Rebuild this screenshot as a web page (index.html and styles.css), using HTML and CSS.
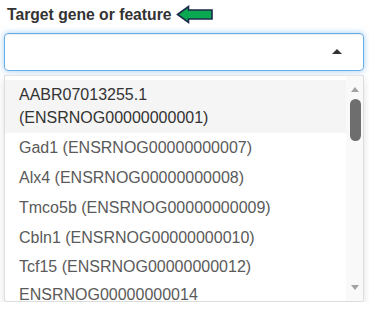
FILE: index.html
```html
<!DOCTYPE html>
<html lang="en">
<head>
    <meta charset="UTF-8">
    <meta name="viewport" content="width=device-width, initial-scale=1.0">
    <title>Target gene or feature</title>
    <link rel="stylesheet" href="styles.css">
</head>
<body>
    <div class="field">
        <div class="field-label">
            <label for="target">Target gene or feature</label>
            <svg class="pointer" width="38" height="20" viewBox="0 0 38 20">
                <polygon points="1.5,9.5 12.5,1.5 12.5,5 36,5 36,14 12.5,14 12.5,17.5" fill="#0aa850" stroke="#1b2a4a" stroke-width="1.6" stroke-linejoin="miter"/>
            </svg>
        </div>
        <div class="select-box" id="target">
            <span class="caret"></span>
        </div>
        <div class="dropdown">
            <ul class="options">
                <li class="active">AABR07013255.1 (ENSRNOG00000000001)</li>
                <li>Gad1 (ENSRNOG00000000007)</li>
                <li>Alx4 (ENSRNOG00000000008)</li>
                <li>Tmco5b (ENSRNOG00000000009)</li>
                <li>Cbln1 (ENSRNOG00000000010)</li>
                <li>Tcf15 (ENSRNOG00000000012)</li>
                <li>ENSRNOG00000000014</li>
            </ul>
            <div class="scrollbar">
                <span class="arrow up"></span>
                <span class="thumb"></span>
                <span class="arrow down"></span>
            </div>
        </div>
    </div>
</body>
</html>
```

FILE: styles.css
```css
body {
    font-family: 'Liberation Sans', Arial, sans-serif;
    background-color: #ffffff;
    color: #333333;
    margin: 0;
    padding: 5px 5px 0 4px;
}

.field {
    width: 360px;
}

.field-label {
    display: flex;
    align-items: center;
    height: 20px;
    margin-left: 3px;
    margin-bottom: 8px;
}

.field-label label {
    font-size: 15.7px;
    font-weight: bold;
    line-height: 20px;
    color: #333333;
}

.pointer {
    margin-left: 5px;
    margin-top: -1px;
}

.select-box {
    box-sizing: border-box;
    height: 38px;
    border: 1px solid #66afe9;
    border-radius: 4px;
    box-shadow: inset 0 1px 1px rgba(0, 0, 0, 0.075), 0 0 6px rgba(102, 175, 233, 0.6);
    display: flex;
    align-items: center;
    justify-content: flex-end;
    padding-right: 21px;
}

.caret {
    width: 0;
    height: 0;
    border-left: 5px solid transparent;
    border-right: 5px solid transparent;
    border-bottom: 5px solid #333333;
    margin-top: -1px;
}

.dropdown {
    box-sizing: border-box;
    margin-top: 4px;
    height: 227px;
    border: 1px solid #dddddd;
    border-top-color: #e4e4e4;
    border-radius: 0 0 3px 3px;
    box-shadow: 0 4px 8px rgba(0, 0, 0, 0.12);
    display: flex;
    overflow: hidden;
    background-color: #ffffff;
}

.options {
    flex: 1;
    list-style-type: none;
    margin: 0;
    padding: 4px 0 0 0;
    overflow: hidden;
}

.options li {
    font-size: 16px;
    line-height: 23px;
    padding: 3.4px 14px;
    color: #5a5a5a;
}

.options li.active {
    background-color: #f5f5f5;
    color: #333333;
}

.options li:last-child {
    line-height: 20px;
}

.scrollbar {
    width: 17px;
    background-color: #f9f9f9;
    display: flex;
    flex-direction: column;
    align-items: center;
    padding-top: 11px;
}

.arrow {
    width: 0;
    height: 0;
    border-left: 4px solid transparent;
    border-right: 4px solid transparent;
    margin-left: 1px;
}

.arrow.up {
    border-bottom: 5px solid #a3a3a3;
}

.arrow.down {
    border-top: 5px solid #a3a3a3;
    margin-top: auto;
    margin-bottom: 11px;
}

.thumb {
    width: 11px;
    height: 42px;
    margin-top: 7px;
    margin-left: 1px;
    border-radius: 6px;
    background-color: #6e6e6e;
}
```
